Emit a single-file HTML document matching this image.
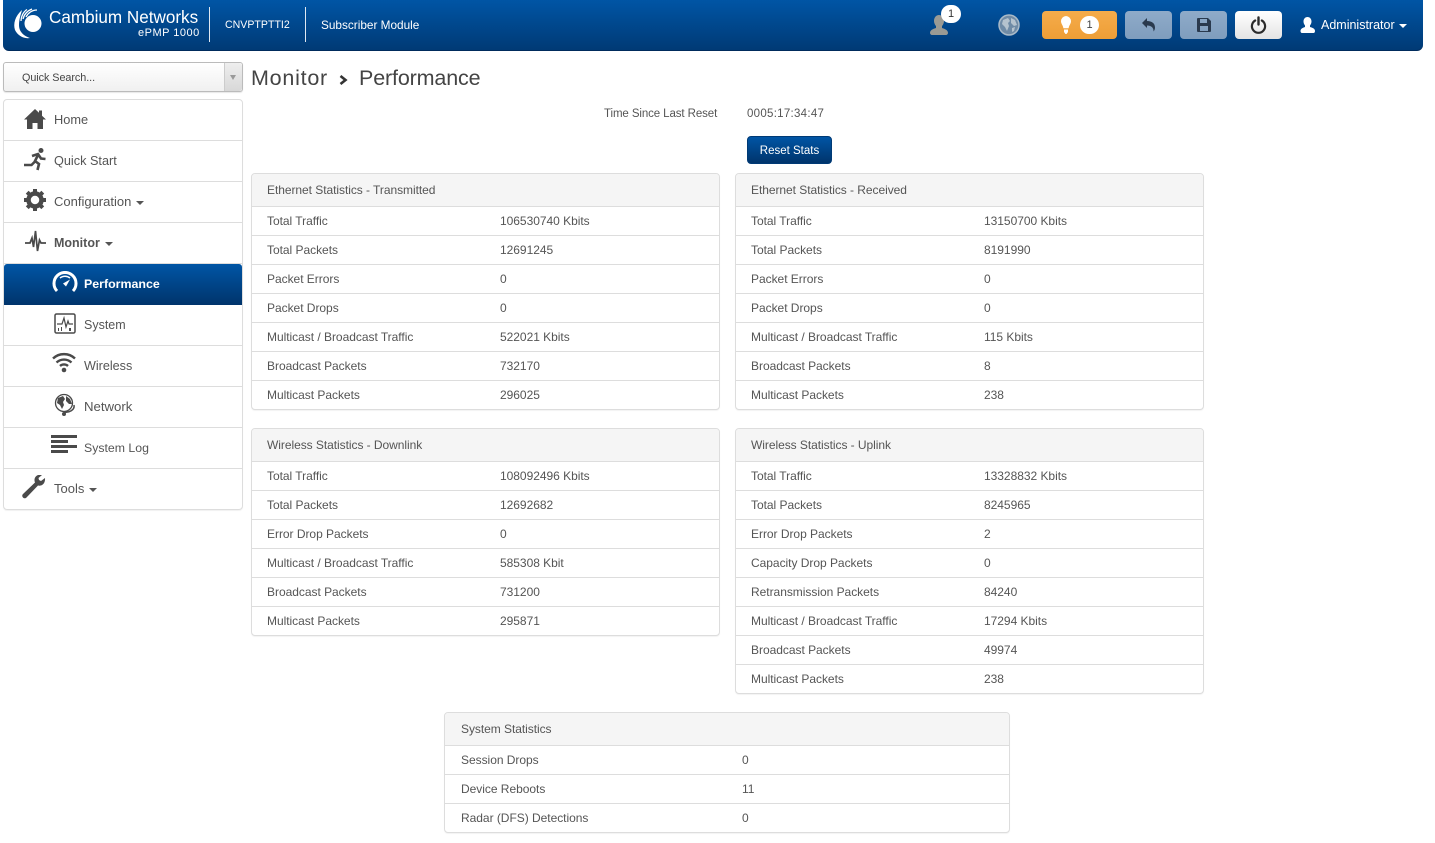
<!DOCTYPE html>
<html><head><meta charset="utf-8"><title>Monitor - Performance</title>
<style>
html,body{margin:0;padding:0;background:#fff}
body{width:1435px;height:843px;position:relative;overflow:hidden;font-family:"Liberation Sans",sans-serif;font-size:12px;color:#555}
*{box-sizing:border-box}
.a{position:absolute;white-space:nowrap}
#nav{left:3px;top:0;width:1420px;height:51px;background:linear-gradient(#0055a5,#003a75);border-radius:0 0 6px 6px;border-bottom:1px solid #002b5c}
.w{color:#fff}
.sep{width:1px;height:35px;top:7px;background:#dfe8f2}
.tb{top:11px;height:28px;border-radius:4px}
.side{left:3px;top:99px;width:240px;height:411px;border:1px solid #ddd;border-radius:4px;box-shadow:0 1px 1px rgba(0,0,0,.06)}
.mi{position:absolute;left:0;width:238px;height:41px;border-bottom:1px solid #ddd;color:#555;font-size:13px;line-height:40px}
.mi span{position:absolute;white-space:nowrap}
.car{display:inline-block;border:4px solid transparent;border-top-color:#555;border-bottom:0;margin-left:5px;vertical-align:1px}
.mi svg{position:absolute}
.p{position:absolute;border:1px solid #ddd;border-radius:4px;box-shadow:0 1px 1px rgba(0,0,0,.05);background:#fff}
.h{height:33px;background:#f5f5f5;border-bottom:1px solid #ddd;line-height:32px;padding-left:15px;border-radius:3px 3px 0 0;letter-spacing:-.05px}
.r{position:relative;height:29px;line-height:28px;border-bottom:1px solid #ddd;padding-left:15px;letter-spacing:-.03px}
.r:last-child{border-bottom:0}
.r b{position:absolute;font-weight:normal;left:248px;top:0}
.s .h,.s .r{padding-left:16px}
.s .r b{left:297px}
</style></head><body>

<div id="nav" class="a"></div>
<svg class="a" style="left:13px;top:8px" width="32" height="32" viewBox="0 0 32 32"><circle cx="20" cy="15.500" r="8.500" fill="#fff"/><path d="M9 2C2 8 0 16 2 22c3 6 9 9 15 8C11 28 6 24 6 17 6 11 8 6 9 2Z" fill="#fff"/><path d="M14 1.500C10 4 8 9 8 13M19 1c-5 2-8 6-9 10M24 2c-5 0-9 3-11 7" fill="none" stroke="#fff" stroke-width="1.300"/></svg>
<div class="a w" style="left:49px;top:9px;font-size:17.100px;line-height:18px">Cambium Networks</div>
<div class="a w" style="left:138px;top:26px;font-size:11px;line-height:14px;letter-spacing:.5px">ePMP 1000</div>
<div class="a sep" style="left:209px"></div>
<div class="a w" style="left:225px;top:18px;font-size:10.600px;line-height:14px">CNVPTPTTI2</div>
<div class="a sep" style="left:305px"></div>
<div class="a w" style="left:321px;top:18px;font-size:11.800px;line-height:14px">Subscriber Module</div>

<svg class="a" style="left:929px;top:14px" width="20" height="22" viewBox="0 0 20 22"><path d="M10 1c3 0 5 2.500 5 6 0 2-1 4-2 5v2c3 1 6 2 6 5 0 1-1 2-2 2H3c-1 0-2-1-2-2 0-3 3-4 6-5v-2C6 11 5 9 5 7c0-3.500 2-6 5-6Z" fill="#9a9a94"/></svg>
<div class="a" style="left:941px;top:5px;width:20px;height:18px;border-radius:10px;background:#fff;color:#333;text-align:center;line-height:18px;font-size:11px">1</div>
<svg class="a" style="left:998px;top:14px" width="22" height="22" viewBox="0 0 22 22"><circle cx="11" cy="11" r="10" fill="#6f8ba6" stroke="#a9bac8" stroke-width="1.500"/><path d="M5 6l5-2 2 3-2 2 1 3-2 5-2-4-3-3ZM13 4l4 2 2 5-3 1-3-3ZM14 14l3-1-1 4-2 1Z" fill="#b5c3ce"/></svg>

<div class="a tb" style="left:1042px;width:75px;background:linear-gradient(#f5ac4b,#ee9e36)"></div>
<svg class="a" style="left:1060px;top:15px" width="12" height="20" viewBox="0 0 12 20"><path d="M6 1a5.200 5.200 0 0 1 5 5.200c0 2.500-2 4-2.400 7H3.400C3 10.200 1 8.700 1 6.200A5.200 5.200 0 0 1 6 1ZM4 14.500h4v2.500l-1.500 2h-1L4 17Z" fill="#fff"/></svg>
<div class="a" style="left:1080px;top:16px;width:19px;height:18px;border-radius:10px;background:#fff;color:#444;text-align:center;line-height:18px;font-size:11px">1</div>

<div class="a tb" style="left:1125px;width:47px;background:linear-gradient(#8fabc9,#7f9dbd)"></div>
<svg class="a" style="left:1142px;top:18px" width="14" height="14" viewBox="0 0 14 14"><path d="M0 5 5 0v3c5 0 8 2.500 8 6.500 0 1.500-.5 3-1.500 4 .3-3.500-2-6-6.500-6v2.500Z" fill="#2a3a4e"/></svg>
<div class="a tb" style="left:1180px;width:47px;background:linear-gradient(#8fabc9,#7f9dbd)"></div>
<svg class="a" style="left:1197px;top:18px" width="14" height="14" viewBox="0 0 14 14"><path fill-rule="evenodd" d="M0 1a1 1 0 0 1 1-1h10l3 3v10a1 1 0 0 1-1 1H1a1 1 0 0 1-1-1ZM3 1v4h7V1ZM3 8v5h8V8Z" fill="#2a3a4e"/></svg>
<div class="a tb" style="left:1235px;width:47px;background:linear-gradient(#fff,#e4e4e4)"></div>
<svg class="a" style="left:1250px;top:16px" width="17" height="18" viewBox="0 0 17 18"><path d="M5.200 4.500a6.600 6.600 0 1 0 6.600 0" fill="none" stroke="#2b2b2b" stroke-width="2.200" stroke-linecap="round"/><path d="M8.500 1.500v7" stroke="#2b2b2b" stroke-width="2.400" stroke-linecap="round"/></svg>

<svg class="a" style="left:1300px;top:17px" width="15" height="16" viewBox="0 0 15 16"><path d="M7.500 0c2.500 0 4 2 4 4.500 0 1.500-.7 3-1.500 4v1.500c2 .6 5 1.500 5 4 0 1-.5 2-1.500 2H2c-1 0-1.500-1-1.500-2 0-2.500 3-3.400 4.500-4V8.500c-.8-1-1.500-2.500-1.500-4C3.500 2 5 0 7.500 0Z" fill="#fff"/></svg>
<div class="a w" style="left:1321px;top:17px;font-size:12.500px;line-height:16px">Administrator</div>
<div class="a" style="left:1399px;top:24px;border:4px solid transparent;border-top-color:#fff;border-bottom:0"></div>

<div class="a" style="left:3px;top:62px;width:240px;height:30px;border:1px solid #bbb;border-radius:3px;background:linear-gradient(#fff,#f0f0f0);box-shadow:0 1px 1px rgba(0,0,0,.1)"></div>
<div class="a" style="left:22px;top:71px;font-size:10.800px;line-height:14px;color:#444;letter-spacing:-.05px">Quick Search...</div>
<div class="a" style="left:224px;top:63px;width:18px;height:28px;background:linear-gradient(#eee,#d8d8d8);border-left:1px solid #ccc;border-radius:0 3px 3px 0"></div>
<div class="a" style="left:230px;top:75px;border:3px solid transparent;border-top:5px solid #999;border-bottom:0"></div>

<div class="a" style="left:251px;top:64px;font-size:21.500px;line-height:28px;color:#444;letter-spacing:.75px">Monitor</div>
<svg class="a" style="left:339px;top:75px" width="9" height="10" viewBox="0 0 9 10"><path d="M1.500 1 6.500 5l-5 4" fill="none" stroke="#333" stroke-width="2.600"/></svg>
<div class="a" style="left:359px;top:64px;font-size:21.500px;line-height:28px;color:#444;letter-spacing:-.15px">Performance</div>

<div class="a side">
 <div class="mi" style="top:0"><span style="left:50px;font-size:12.800px">Home</span><svg style="left:19px;top:8px" width="24" height="22" viewBox="0 0 24 22"><path d="M12 1 1 11.500h3V21h5.500v-6h5v6H20v-9.500h3L19 7.700V2.500h-3v2.300Z" fill="#4a4a4a"/></svg></div>
 <div class="mi" style="top:41px"><span style="left:50px;font-size:12.700px">Quick Start</span><svg style="left:19px;top:6px" width="24" height="24" viewBox="0 0 24 24"><circle cx="18" cy="3.500" r="2.500" fill="#4a4a4a"/><path d="M9 9l6-2 3 4.500 4.500.5M15 8l-3 6 4 3-1.500 6M11.500 15l-3 3H1" fill="none" stroke="#4a4a4a" stroke-width="2.600"/></svg></div>
 <div class="mi" style="top:82px"><span style="left:50px">Configuration<i class="car"></i></span><svg style="left:20px;top:7px" width="22" height="22" viewBox="0 0 22 22"><circle cx="11" cy="11" r="6.500" fill="none" stroke="#4a4a4a" stroke-width="4.500"/><path d="M11 0v22M0 11h22M3.200 3.200l15.600 15.600M18.800 3.200 3.200 18.800" stroke="#4a4a4a" stroke-width="4" stroke-dasharray="4 14"/></svg></div>
 <div class="mi" style="top:123px"><span style="left:50px;font-weight:bold;font-size:12.500px">Monitor<i class="car"></i></span><svg style="left:20px;top:7px" width="22" height="22" viewBox="0 0 22 22"><path d="M1 13h5l2-5 1.500 9 2-16 2 20 2-11 1.500 3h5" fill="none" stroke="#4a4a4a" stroke-width="1.700"/></svg></div>
 <div class="mi" style="top:164px;left:0;height:41px;background:linear-gradient(#0055a5,#00346b);border:0;border-radius:3px 3px 0 0;color:#fff"><span style="left:80px;font-weight:bold;font-size:12.400px">Performance</span><svg style="left:48px;top:7px" width="26" height="24" viewBox="0 0 26 24"><path d="M5 20A11 11 0 1 1 21 20" fill="none" stroke="#fff" stroke-width="3"/><path d="M8 7a8 8 0 0 1 10 0" fill="none" stroke="#fff" stroke-width="1.500"/><path d="M11 12.500l7-4-4 7Z" fill="#fff"/></svg></div>
 <div class="mi" style="top:205px"><span style="left:80px;font-size:12.500px">System</span><svg style="left:50px;top:8px" width="22" height="21" viewBox="0 0 22 21"><rect x="1" y="1" width="20" height="19" rx="1.500" fill="none" stroke="#4a4a4a" stroke-width="1.500"/><path d="M3 11h5l2-6 2 9 2-6 1 3h4" fill="none" stroke="#4a4a4a" stroke-width="1.200"/><path d="M4 18v-3h1v3ZM7 18v-4h1v4ZM15 18v-3h2v3Z" fill="#4a4a4a"/></svg></div>
 <div class="mi" style="top:246px"><span style="left:80px;font-size:12.600px">Wireless</span><svg style="left:48px;top:6px" width="24" height="22" viewBox="0 0 24 22"><path d="M1 6.500a16 16 0 0 1 22 0M4.500 10.500a11 11 0 0 1 15 0M8 14a6 6 0 0 1 8 0" fill="none" stroke="#4a4a4a" stroke-width="2.400"/><circle cx="12" cy="18" r="2.300" fill="#4a4a4a"/></svg></div>
 <div class="mi" style="top:287px"><span style="left:80px;font-size:13.200px">Network</span><svg style="left:50px;top:6px" width="22" height="24" viewBox="0 0 22 24"><circle cx="10" cy="10" r="8.500" fill="none" stroke="#4a4a4a" stroke-width="1.300"/><path d="M4 5l5-2 2 3-2 3 1 3-2 4-2-4-3-2ZM12 3l4 3 2 5-3 0-3-3Z" fill="#4a4a4a"/><path d="M20 12c1 5-5 8-10 7" fill="none" stroke="#4a4a4a" stroke-width="1.500"/><circle cx="10" cy="21" r="2" fill="#4a4a4a"/></svg></div>
 <div class="mi" style="top:328px"><span style="left:80px;font-size:12.300px">System Log</span><svg style="left:47px;top:7px" width="27" height="19" viewBox="0 0 27 19"><path d="M0 0h26v3H0ZM0 5h17v3H0ZM0 10h26v3H0ZM0 15h17v3H0Z" fill="#4a4a4a"/></svg></div>
 <div class="mi" style="top:369px;border-bottom:0"><span style="left:50px">Tools<i class="car"></i></span><svg style="left:18px;top:6px" width="24" height="24" viewBox="0 0 24 24"><path d="M23 3l-4 3-2-1-.5-2L20 0c-4-1-7 1-7.500 4.500 0 1 0 2 .5 3L1 19c-1 1-1 2.500 0 3.500s2.500 1 3.500 0L16 10.500c4 1 7.500-2 7-7.500Z" fill="#4a4a4a"/></svg></div>
</div>

<div class="a" style="left:604px;top:107px;line-height:14px;font-size:11.500px;letter-spacing:-.1px">Time Since Last Reset</div>
<div class="a" style="left:747px;top:107px;line-height:14px;font-size:11.500px;letter-spacing:.28px">0005:17:34:47</div>
<div class="a w" style="left:747px;top:136px;width:85px;height:28px;background:linear-gradient(#0055a5,#00346b);border-radius:4px;border:1px solid #003a75;text-align:center;line-height:28px;font-size:11.500px">Reset Stats</div>

<div class="p" style="left:251px;top:173px;width:469px;height:237px"><div class="h">Ethernet Statistics - Transmitted</div>
<div class="r">Total Traffic<b>106530740 Kbits</b></div>
<div class="r">Total Packets<b>12691245</b></div>
<div class="r">Packet Errors<b>0</b></div>
<div class="r">Packet Drops<b>0</b></div>
<div class="r">Multicast / Broadcast Traffic<b>522021 Kbits</b></div>
<div class="r">Broadcast Packets<b>732170</b></div>
<div class="r">Multicast Packets<b>296025</b></div></div>

<div class="p" style="left:735px;top:173px;width:469px;height:237px"><div class="h">Ethernet Statistics - Received</div>
<div class="r">Total Traffic<b>13150700 Kbits</b></div>
<div class="r">Total Packets<b>8191990</b></div>
<div class="r">Packet Errors<b>0</b></div>
<div class="r">Packet Drops<b>0</b></div>
<div class="r">Multicast / Broadcast Traffic<b>115 Kbits</b></div>
<div class="r">Broadcast Packets<b>8</b></div>
<div class="r">Multicast Packets<b>238</b></div></div>

<div class="p" style="left:251px;top:428px;width:469px;height:208px"><div class="h">Wireless Statistics - Downlink</div>
<div class="r">Total Traffic<b>108092496 Kbits</b></div>
<div class="r">Total Packets<b>12692682</b></div>
<div class="r">Error Drop Packets<b>0</b></div>
<div class="r">Multicast / Broadcast Traffic<b>585308 Kbit</b></div>
<div class="r">Broadcast Packets<b>731200</b></div>
<div class="r">Multicast Packets<b>295871</b></div></div>

<div class="p" style="left:735px;top:428px;width:469px;height:266px"><div class="h">Wireless Statistics - Uplink</div>
<div class="r">Total Traffic<b>13328832 Kbits</b></div>
<div class="r">Total Packets<b>8245965</b></div>
<div class="r">Error Drop Packets<b>2</b></div>
<div class="r">Capacity Drop Packets<b>0</b></div>
<div class="r">Retransmission Packets<b>84240</b></div>
<div class="r">Multicast / Broadcast Traffic<b>17294 Kbits</b></div>
<div class="r">Broadcast Packets<b>49974</b></div>
<div class="r">Multicast Packets<b>238</b></div></div>

<div class="p s" style="left:444px;top:712px;width:566px;height:121px"><div class="h">System Statistics</div>
<div class="r">Session Drops<b>0</b></div>
<div class="r">Device Reboots<b>11</b></div>
<div class="r">Radar (DFS) Detections<b>0</b></div></div>

</body></html>
